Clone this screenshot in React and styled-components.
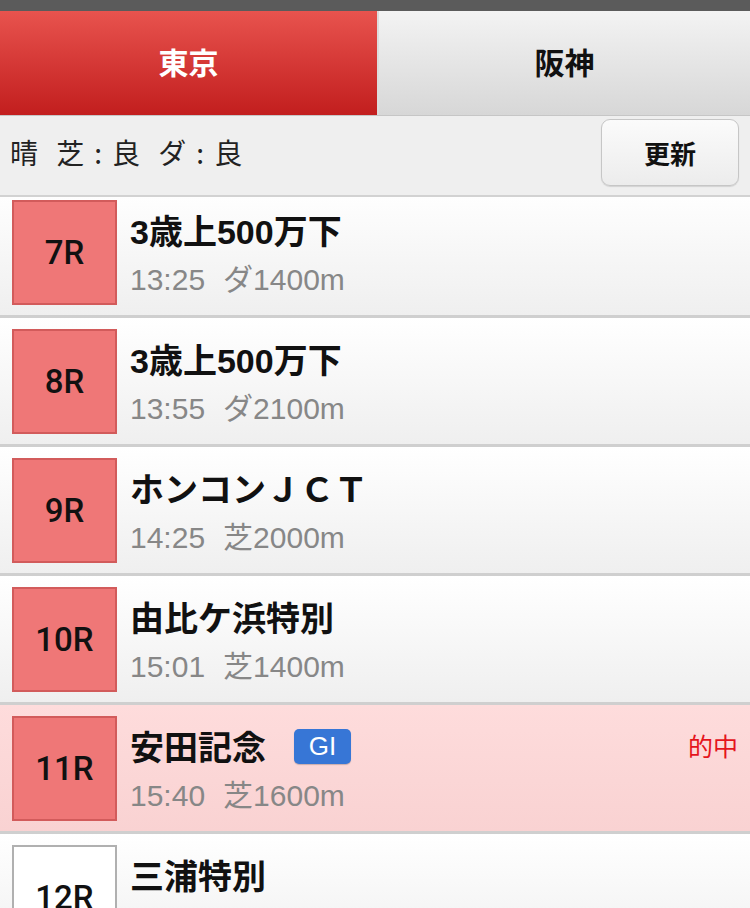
import React from 'react';
import styled, {createGlobalStyle} from 'styled-components';

const GlobalStyle = createGlobalStyle`
  html, body {
    margin: 0;
    padding: 0;
    background: #fff;
  }
  body {
    width: 750px;
    height: 908px;
    overflow: hidden;
    font-family: "Liberation Sans", "Noto Sans CJK JP", sans-serif;
  }
`;

const Page = styled.div`
  display: flex;
  flex-direction: column;
  height: 908px;
`;

const StatusBar = styled.div`
  height: 11px;
  background: #5b5b5b;
`;

const Tabs = styled.div`
  display: grid;
  grid-template-columns: 377px 1fr;
  gap: 2px;
  background: #dcdcdc;
  height: 104px;
  border-bottom: 1px solid #c6c6c6;
`;

const Tab = styled.div`
  display: flex;
  align-items: center;
  justify-content: center;
  padding-bottom: 4px;
  font-family: "Noto Sans CJK JP", sans-serif;
  font-size: 30px;
  font-weight: 700;
  color: ${p => (p.active ? '#fff' : '#111')};
  background: ${p => (p.active
    ? 'linear-gradient(#e8534e, #c21e1e)'
    : 'linear-gradient(#f3f3f3, #d7d7d7)')};
`;

const InfoBar = styled.div`
  height: 79px;
  display: flex;
  align-items: center;
  justify-content: space-between;
  padding: 0 11px 0 10px;
  background: #efefef;
  border-bottom: 2px solid #d2d2d2;
`;

const Weather = styled.div`
  font-family: "Noto Sans CJK JP", sans-serif;
  font-size: 28px;
  color: #222;
  word-spacing: 12px;
  margin-top: -8px;

  b {
    font-weight: 400;
    margin: 0 10px;
  }
`;

const RefreshButton = styled.button`
  width: 138px;
  height: 67px;
  margin-top: -6px;
  border: 1px solid #c6c6c6;
  border-radius: 9px;
  background: linear-gradient(#fbfbfb, #ececec);
  box-shadow: 0 1px 1px rgba(0, 0, 0, 0.12);
  font-family: "Noto Sans CJK JP", sans-serif;
  font-size: 26px;
  font-weight: 700;
  color: #111;
`;

const List = styled.div`
  flex: 1;
  overflow: hidden;
`;

// the list is scrolled a few pixels, so the first row starts under the bar
const Scroller = styled.div`
  margin-top: -8px;
`;

const Row = styled.div`
  display: flex;
  gap: 13px;
  padding: 11px 12px 0;
  box-sizing: border-box;
  height: 129px;
  border-bottom: 3px solid #cfcfcf;
  background: ${p => (p.hit
    ? 'linear-gradient(#fedcdc, #f9d2d2)'
    : 'linear-gradient(#ffffff, #efefef)')};
`;

const Badge = styled.div`
  width: 105px;
  height: 105px;
  flex: none;
  box-sizing: border-box;
  display: flex;
  align-items: center;
  justify-content: center;
  font-family: Roboto, "Liberation Sans", sans-serif;
  font-size: 33px;
  font-weight: 500;
  color: #111;
  background: ${p => (p.done ? '#ef7777' : '#fff')};
  border: 2px solid ${p => (p.done ? '#d25b5b' : '#b0b0b0')};
`;

const Info = styled.div`
  flex: 1;
  display: flex;
  flex-direction: column;
`;

const TitleLine = styled.div`
  display: flex;
  align-items: center;
  height: 40px;
  margin-top: 9px;
`;

const Title = styled.div`
  font-size: 34px;
  font-weight: 700;
  color: #111;
`;

const Grade = styled.span`
  margin-left: 28px;
  margin-top: 2px;
  width: 57px;
  height: 35px;
  border-radius: 5px;
  background: #3776d6;
  box-shadow: 0 1px 1px rgba(0, 0, 0, 0.2);
  color: #fff;
  font-size: 26px;
  display: flex;
  align-items: center;
  justify-content: center;
`;

const Result = styled.span`
  margin-left: auto;
  font-family: "Noto Sans CJK JP", sans-serif;
  font-size: 25px;
  color: #e5141c;
`;

const Sub = styled.div`
  height: 40px;
  margin-top: 11px;
  display: flex;
  align-items: baseline;
  gap: 18px;
  font-size: 30px;
  line-height: 40px;
  color: #878787;
`;

const races = [
  {no: '7R', name: '3歳上500万下', time: '13:25', course: 'ダ1400m', done: true},
  {no: '8R', name: '3歳上500万下', time: '13:55', course: 'ダ2100m', done: true},
  {no: '9R', name: 'ホンコンＪＣＴ', time: '14:25', course: '芝2000m', done: true},
  {no: '10R', name: '由比ケ浜特別', time: '15:01', course: '芝1400m', done: true},
  {no: '11R', name: '安田記念', time: '15:40', course: '芝1600m', done: true, grade: 'GI', hit: '的中'},
  {no: '12R', name: '三浦特別', time: '16:25', course: 'ダ1600m', done: false}
];

const App = () => (
  <Page>
    <GlobalStyle/>
    <StatusBar/>
    <Tabs>
      <Tab active>東京</Tab>
      <Tab>阪神</Tab>
    </Tabs>
    <InfoBar>
      <Weather>晴 芝<b>:</b>良 ダ<b>:</b>良</Weather>
      <RefreshButton>更新</RefreshButton>
    </InfoBar>
    <List>
      <Scroller>
        {races.map(r => (
          <Row key={r.no} hit={r.hit}>
            <Badge done={r.done}>{r.no}</Badge>
            <Info>
              <TitleLine>
                <Title>{r.name}</Title>
                {r.grade && <Grade>{r.grade}</Grade>}
                {r.hit && <Result>{r.hit}</Result>}
              </TitleLine>
              <Sub>
                <span>{r.time}</span>
                <span>{r.course}</span>
              </Sub>
            </Info>
          </Row>
        ))}
      </Scroller>
    </List>
  </Page>
);

export default App;
